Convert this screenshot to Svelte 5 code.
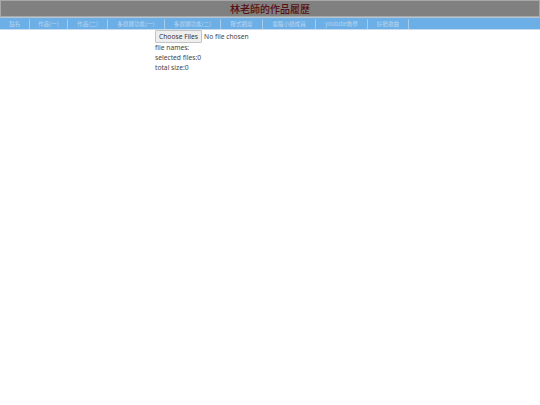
<script>
  const tabs = [
    { label: '點名', width: 30 },
    { label: '作品(一)', width: 38 },
    { label: '作品(二)', width: 40 },
    { label: '多媒體功能(一)', width: 57 },
    { label: '多媒體功能(二)', width: 56 },
    { label: '程式觀摩', width: 42 },
    { label: '電腦小組成員', width: 53 },
    { label: 'youtube教學', width: 52 },
    { label: '好聽歌曲', width: 41 }
  ];
</script>

<header class="title">林老師的作品履歷</header>

<nav class="tabs">
  {#each tabs as tab}
    <a href="#top" class="tab" style="width: {tab.width}px">{tab.label}</a>
  {/each}
</nav>

<main class="content">
  <input class="picker" type="file" multiple />
  <div class="line">file names:</div>
  <div class="line">selected files:0</div>
  <div class="line">total size:0</div>
</main>

<style>
  :global(body) {
    background: #fff;
    font-family: "Noto Sans", "Noto Sans CJK TC", sans-serif;
  }

  .title {
    box-sizing: border-box;
    height: 17px;
    background: #808080;
    border: 1px solid #a8a8a8;
    color: #5a0f14;
    font-family: "Noto Sans CJK TC", sans-serif;
    font-size: 10px;
    font-weight: 500;
    line-height: 15px;
    text-align: center;
  }

  .tabs {
    display: flex;
    box-sizing: border-box;
    height: 13px;
    padding-top: 1px;
    background: #6caee6;
    border-top: 1px solid #b4c6d6;
    border-bottom: 1px solid #c8dcee;
  }

  .tab {
    box-sizing: border-box;
    border-right: 1px solid #a9cbea;
    border-radius: 1px 1px 0 0;
    color: #b9d6f0;
    font-family: "Noto Sans CJK TC", sans-serif;
    font-size: 5.6px;
    line-height: 11px;
    text-align: center;
    text-decoration: none;
    white-space: nowrap;
    overflow: hidden;
  }

  .content {
    padding-left: 155px;
    color: #444;
    font-size: 6.7px;
    line-height: 10px;
  }

  .picker {
    display: block;
    height: 13px;
    font-family: inherit;
    font-size: 6.7px;
  }

  .picker::file-selector-button {
    height: 13px;
    padding: 0 3px;
    margin-right: 2px;
    border: 1px solid #c4c4c4;
    border-radius: 1px;
    background: #eeeeee;
    color: #333;
    font-family: inherit;
    font-size: 6.7px;
  }
</style>
